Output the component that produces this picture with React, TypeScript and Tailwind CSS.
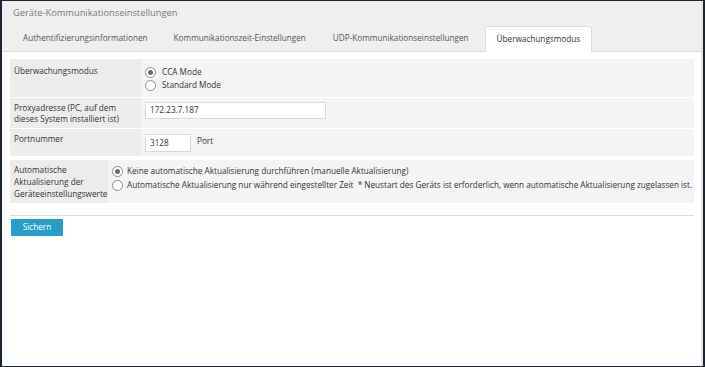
import React from "react";

const font = { fontFamily: '"Open Sans", "Noto Sans", "Liberation Sans", sans-serif' };

function Radio({ checked }: { checked?: boolean }) {
  return (
    <span className="w-[11px] h-[11px] rounded-full border border-[#8a8a8a] bg-white flex items-center justify-center shrink-0">
      {checked ? <span className="w-[5px] h-[5px] rounded-full bg-[#6b6b6b]" /> : null}
    </span>
  );
}

export default function App() {
  return (
    <div
      className="w-[705px] h-[367px] border-l-2 border-r-2 border-t border-b border-[#1c2632] flex text-[8.2px] text-[#333] bg-white overflow-hidden whitespace-nowrap"
      style={font}
    >
      <div className="flex-1 flex flex-col bg-white">
        <div className="bg-[#efefef] h-[51px] flex flex-col border-b border-[#dcdcdc]">
          <div className="h-[25px] pl-[11px] pt-[5px] text-[9.3px] text-[#7a7a7a] leading-[14px]">
            Geräte-Kommunikationseinstellungen
          </div>
          <div className="flex items-end pl-[9px] gap-[2px] h-[25px]">
            <div className="px-[12px] h-[25px] flex items-center text-[#555]">Authentifizierungsinformationen</div>
            <div className="px-[12px] h-[25px] flex items-center text-[#555]">Kommunikationszeit-Einstellungen</div>
            <div className="pl-[13px] pr-[14px] h-[25px] flex items-center text-[#555]">UDP-Kommunikationseinstellungen</div>
            <div className="px-[11px] h-[26px] -mb-px flex items-center text-[#333] bg-white border border-b-0 border-[#dcdcdc] rounded-t-[3px] w-[107px]">
              Überwachungsmodus
            </div>
          </div>
        </div>
        <div className="pl-[8px] pr-[7px] pt-[7px]">
          <div className="flex flex-col gap-px">
            <div className="flex h-[38px]">
              <div className="w-[131px] bg-[#ececec] px-[4px] pt-[6px]">Überwachungsmodus</div>
              <div className="flex-1 bg-[#f4f4f4] pl-[4px] pt-[8px] flex flex-col gap-[2px]">
                <div className="flex items-center gap-[6px] h-[11px]"><Radio checked /><span>CCA Mode</span></div>
                <div className="flex items-center gap-[6px] h-[11px]"><Radio /><span>Standard Mode</span></div>
              </div>
            </div>
            <div className="flex h-[30px]">
              <div className="w-[131px] bg-[#ececec] px-[4px] pt-[4px] leading-[11px]">
                Proxyadresse (PC, auf dem<br />dieses System installiert ist)
              </div>
              <div className="flex-1 bg-[#f4f4f4] pl-[4px] pt-[4px]">
                <div className="w-[181px] h-[17px] bg-white border border-[#d9d9d9] px-[4px] flex items-center">172.23.7.187</div>
              </div>
            </div>
            <div className="flex h-[27px]">
              <div className="w-[131px] bg-[#ececec] px-[4px] pt-[4px]">Portnummer</div>
              <div className="flex-1 bg-[#f4f4f4] pl-[4px] pt-[5px] flex items-start gap-[6px]">
                <div className="w-[46px] h-[18px] bg-white border border-[#d9d9d9] px-[4px] flex items-center">3128</div>
                <span className="pt-[1px]">Port</span>
              </div>
            </div>
          </div>
          <div className="flex h-[43px] mt-[4px]">
            <div className="w-[98px] bg-[#ececec] px-[4px] pt-[4px] leading-[12px]">
              Automatische<br />Aktualisierung der<br />Geräteeinstellungswerte
            </div>
            <div className="flex-1 bg-[#f4f4f4] pl-[4px] pt-[6px] flex flex-col gap-[3px]">
              <div className="flex items-center gap-[4px] h-[11px]"><Radio checked /><span>Keine automatische Aktualisierung durchführen (manuelle Aktualisierung)</span></div>
              <div className="flex items-center gap-[4px] h-[11px]"><Radio /><span>Automatische Aktualisierung nur während eingestellter Zeit&nbsp; * Neustart des Geräts ist erforderlich, wenn automatische Aktualisierung zugelassen ist.</span></div>
            </div>
          </div>
          <div className="h-px bg-[#dddddd] mt-[12px]" />
          <div className="pt-[3px] pl-px">
            <button className="w-[52px] h-[17px] bg-[#2a9dc6] text-white text-[8.2px] flex items-center justify-center rounded-[1px]">Sichern</button>
          </div>
        </div>
      </div>
      <div className="w-[2px] bg-[#e4e4e8]" />
    </div>
  );
}
